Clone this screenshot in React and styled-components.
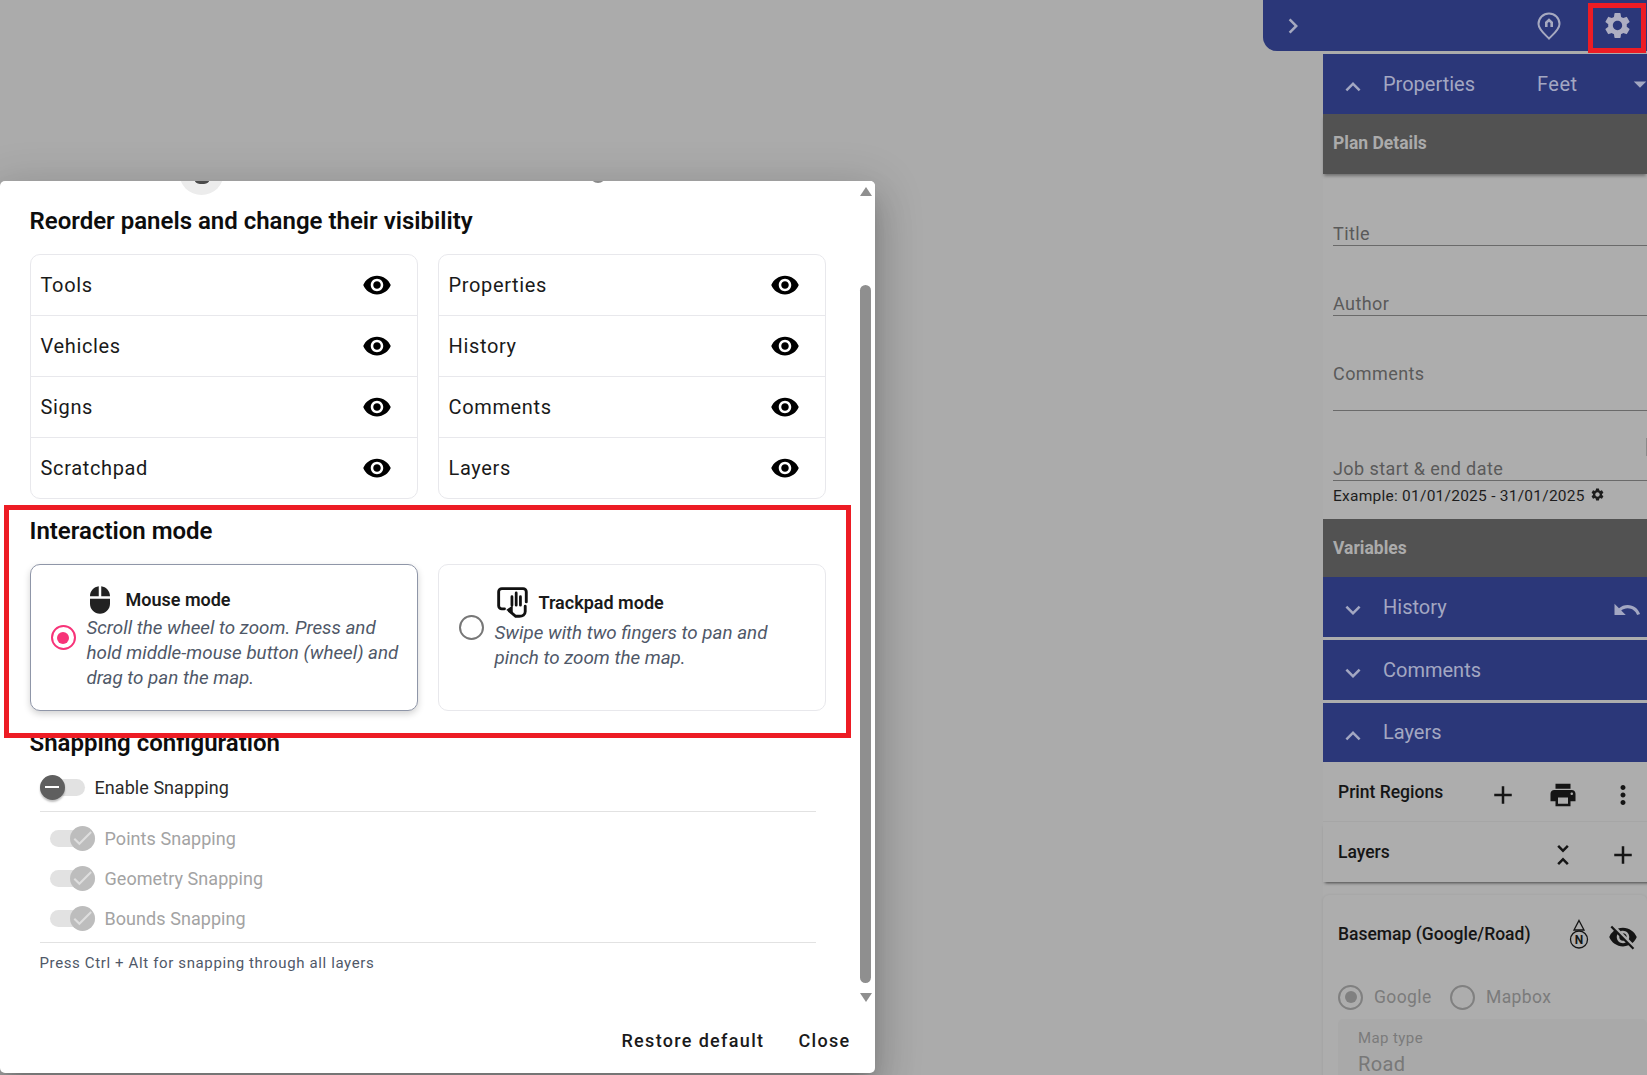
import React from 'react';
import styled, { createGlobalStyle } from 'styled-components';
import {
  MdVisibility, MdVisibilityOff, MdExpandLess, MdExpandMore, MdSettings, MdChevronRight, MdUndo,
  MdAdd, MdPrint, MdMoreVert, MdMouse, MdCheck, MdRemove, MdArrowDropDown, MdUnfoldLess,
} from 'react-icons/md';

const GlobalStyle = createGlobalStyle`
  html, body { margin: 0; padding: 0; }
  body { font-family: Roboto, 'Liberation Sans', sans-serif; background: #ababab; }
`;

const Page = styled.div`
  position: relative;
  width: 1647px;
  height: 1075px;
  overflow: hidden;
  background: #ababab;
  display: flex;
  justify-content: flex-end;
`;

/* right side, dimmed by the backdrop */
const Sidebar = styled.div`
  width: 384px;
  flex: none;
  display: flex;
  flex-direction: column;
`;

const TopBar = styled.div`
  height: 51px;
  flex: none;
  margin-bottom: 3px;
  background: #2b3779;
  border-bottom-left-radius: 14px;
  color: #a6a9c0;
  display: flex;
  align-items: center;
  padding-left: 15px;
`;

const TopBarSpacer = styled.div`
  flex: 1;
`;

const PinSlot = styled.div`
  width: 76px;
  display: flex;
  justify-content: center;
`;

const GearSlot = styled.div`
  width: 60px;
  display: flex;
  justify-content: center;
  color: #aeaec2;
`;

const Panel = styled.div`
  margin-left: 60px;
  flex: 1;
  background: #adadad;
  display: flex;
  flex-direction: column;
  min-height: 0;
`;

const Bar = styled.div`
  height: ${p => p.$h || 60}px;
  flex: none;
  margin-bottom: ${p => p.$gap || 0}px;
  background: #2b3779;
  color: #a3a7c2;
  display: flex;
  align-items: center;
  font-size: 20px;
  position: relative;
`;

const BarChevron = styled.div`
  width: 60px;
  flex: none;
  display: flex;
  justify-content: center;
  padding-top: 6px;
`;

const BarTitle = styled.div`
  width: 154px;
  flex: none;
  padding-bottom: ${p => p.$bottom || 0}px;
`;

const BarEnd = styled.div`
  margin-left: auto;
  display: flex;
  padding-top: ${p => p.$top}px;
  margin-right: ${p => p.$right}px;
`;

const Feet = styled.div`
  flex: 1;
  letter-spacing: 0.5px;
`;

const GreyHead = styled.div`
  height: ${p => p.$h}px;
  flex: none;
  background: #525252;
  color: #ababab;
  font-size: 17.5px;
  font-weight: 700;
  display: flex;
  align-items: center;
  padding-left: 10px;
  padding-bottom: ${p => p.$bottom || 0}px;
  box-sizing: border-box;
  box-shadow: ${p => (p.$shadow ? '0 3px 3px -1px rgba(0,0,0,.35)' : 'none')};
  position: relative;
`;

const Field = styled.div`
  height: ${p => p.$h || 25}px;
  margin: ${p => p.$top}px 0 0 10px;
  box-sizing: border-box;
  border-bottom: 1px solid #6a6a6a;
  color: #5a5a5a;
  font-size: 18px;
  letter-spacing: 0.42px;
  line-height: 25px;
  flex: none;
  position: relative;
`;

const ScrollNub = styled.div`
  position: absolute;
  right: 0;
  top: -18px;
  width: 1px;
  height: 18px;
  background: #8a8a8a;
`;

const Example = styled.div`
  margin: 5px 0 13px 10px;
  height: 20px;
  flex: none;
  color: #1d1d1d;
  font-size: 15.5px;
  letter-spacing: 0.25px;
  line-height: 20px;
  display: flex;
  align-items: center;
  gap: 5px;
  svg { margin-top: -4px; }
`;

const ToolRow = styled.div`
  height: 60px;
  flex: none;
  display: flex;
  align-items: center;
  padding-left: 15px;
  margin-right: -6px;
  box-sizing: border-box;
  color: #151515;
  border-bottom: ${p => (p.$sep ? '1px solid #a6a6a6' : 'none')};
  box-shadow: ${p => (p.$shadow ? '0 3px 3px -2px rgba(0,0,0,.6)' : 'none')};
  position: relative;
`;

const ToolTitle = styled.div`
  flex: 1;
  font-size: 17.5px;
  font-weight: 500;
`;

const ToolIcon = styled.div`
  width: 60px;
  flex: none;
  display: flex;
  justify-content: center;
  padding-top: 6px;
`;

const BaseCard = styled.div`
  margin-top: 13px;
  flex: 1;
  background: #adadad;
  border-radius: 6px 6px 0 0;
  box-shadow: 0 0 3px rgba(0,0,0,.08);
  padding: 9px 0 0 15px;
`;

const BaseRow = styled.div`
  height: 60px;
  display: flex;
  align-items: center;
  margin-right: 2px;
  color: #151515;
`;

const BaseTitle = styled.div`
  flex: 1;
  font-size: 17.5px;
  font-weight: 500;
`;

const BaseIcon = styled.div`
  width: 44px;
  flex: none;
  display: flex;
  justify-content: center;
  padding-top: ${p => p.$top || 0}px;
`;

const SourceRow = styled.div`
  margin-top: 16px;
  height: 34px;
  display: flex;
  align-items: center;
  color: #7b7b7b;
  font-size: 17.5px;
  letter-spacing: 0.4px;
`;

const SourceDot = styled.span`
  width: 25px;
  height: 25px;
  box-sizing: border-box;
  border-radius: 50%;
  border: 2px solid #808080;
  display: flex;
  align-items: center;
  justify-content: center;
  margin-right: ${p => p.$after}px;
  flex: none;
  &::after {
    content: '';
    display: ${p => (p.$on ? 'block' : 'none')};
    width: 12px;
    height: 12px;
    border-radius: 50%;
    background: #808080;
  }
`;

const SourceLabel = styled.span`
  width: ${p => p.$w}px;
  flex: none;
`;

const Select = styled.div`
  margin-top: 5px;
  height: 70px;
  padding: 9px 0 0 20px;
  background: #a9a9a9;
  border-radius: 5px 5px 0 0;
`;

const SelectLabel = styled.div`
  font-size: 15px;
  color: #7b7b7b;
  line-height: 20px;
  letter-spacing: 0.4px;
`;

const SelectValue = styled.div`
  font-size: 20px;
  color: #787878;
  line-height: 32px;
  letter-spacing: 0.4px;
`;

/* settings dialog */
const Dialog = styled.div`
  position: absolute;
  left: 0;
  top: 181px;
  width: 875px;
  height: 892px;
  background: #fff;
  border-radius: 5px;
  box-shadow: 0 11px 15px -7px rgba(0,0,0,.2), 0 24px 38px 3px rgba(0,0,0,.14), 0 9px 46px 8px rgba(0,0,0,.12);
  display: flex;
  flex-direction: column;
  overflow: hidden;
`;

const DialogBody = styled.div`
  height: 826px;
  flex: none;
  display: flex;
`;

const DialogScroll = styled.div`
  flex: 1;
  min-width: 0;
  padding: 27px 0 0 29.5px;
  position: relative;
  overflow: hidden;
`;

const HoverCircle = styled.div`
  position: absolute;
  left: ${p => p.$x}px;
  top: ${p => p.$y}px;
  width: ${p => p.$d}px;
  height: ${p => p.$d}px;
  border-radius: 50%;
  background: ${p => p.$bg};
  display: flex;
  align-items: flex-end;
  justify-content: center;
`;

const EyeStub = styled.div`
  width: 16px;
  height: 6px;
  margin-bottom: 11px;
  background: #4a4a4a;
  border-radius: 0 0 8px 8px;
`;

const ScrollRail = styled.div`
  width: 18px;
  padding-right: 1px;
  flex: none;
  background: #fff;
  display: flex;
  flex-direction: column;
  align-items: center;
  padding-top: 6px;
  box-sizing: border-box;
`;

const ArrowUp = styled.div`
  width: 0;
  height: 0;
  border-left: 6.5px solid transparent;
  border-right: 6.5px solid transparent;
  border-bottom: 9px solid #8f8f8f;
  margin-bottom: 89px;
`;

const ArrowDown = styled.div`
  width: 0;
  height: 0;
  border-left: 6.5px solid transparent;
  border-right: 6.5px solid transparent;
  border-top: 9px solid #8f8f8f;
  margin-top: 10px;
`;

const ScrollThumb = styled.div`
  width: 11px;
  height: 698px;
  flex: none;
  border-radius: 6px;
  background: #8f8f8f;
`;

const SectionTitle = styled.h2`
  margin: ${p => p.$top || 0}px 0 20px;
  font-size: 24px;
  line-height: 26px;
  font-weight: 600;
  color: #0d0d0d;
`;

const TwoCols = styled.div`
  display: grid;
  grid-template-columns: 388px 388px;
  gap: 20px;
  width: 796px;
`;

const ListBox = styled.div`
  border: 1px solid #e8e8ec;
  border-radius: 10px;
  height: 245px;
  box-sizing: border-box;
  display: flex;
  flex-direction: column;
`;

const ListRow = styled.div`
  flex: 1;
  display: flex;
  align-items: center;
  justify-content: space-between;
  padding: 0 25px 0 10px;
  font-size: 20px;
  letter-spacing: 0.65px;
  color: #1a1a1a;
  & + & { border-top: 1px solid #e8e8ec; }
`;

const ModeCard = styled.div`
  height: 147px;
  box-sizing: border-box;
  border-radius: 10px;
  background: #fff;
  border: 1px solid ${p => (p.$active ? '#8f96a8' : '#e8e8ec')};
  box-shadow: ${p => (p.$active ? '0 3px 7px rgba(0,0,0,.18)' : 'none')};
  display: flex;
  align-items: center;
  padding-left: 20px;
`;

const Radio = styled.div`
  width: 25px;
  height: 25px;
  box-sizing: border-box;
  flex: none;
  border-radius: 50%;
  border: 2px solid ${p => (p.$on ? '#f73378' : '#777')};
  display: flex;
  align-items: center;
  justify-content: center;
  margin-top: ${p => p.$top || 0}px;
  &::after {
    content: '';
    display: ${p => (p.$on ? 'block' : 'none')};
    width: 12px;
    height: 12px;
    border-radius: 50%;
    background: #f73378;
  }
`;

const ModeText = styled.div`
  margin-left: ${p => p.$left}px;
  margin-top: ${p => p.$top || 0}px;
  display: flex;
  flex-direction: column;
`;

const ModeHead = styled.div`
  display: flex;
  align-items: center;
  gap: ${p => p.$gap}px;
  margin-left: ${p => p.$indent}px;
  height: ${p => p.$h}px;
  font-size: 18px;
  font-weight: 600;
  color: #1a1a1a;
  span { margin-top: ${p => p.$nudge || 0}px; }
`;

const ModeDesc = styled.div`
  font-size: 18.8px;
  font-style: italic;
  line-height: 25px;
  color: #4f5868;
`;

const SwitchRow = styled.div`
  display: flex;
  align-items: center;
  height: 40px;
  margin: ${p => p.$top || 0}px 0 0 ${p => p.$left}px;
  gap: ${p => p.$gap}px;
  font-size: 18px;
  letter-spacing: 0.06px;
  color: ${p => (p.$off ? '#a3a3a3' : '#2a2a2a')};
`;

const SwitchTrack = styled.div`
  width: ${p => p.$w}px;
  height: 17px;
  border-radius: 9px;
  background: #e2e2e2;
  position: relative;
  flex: none;
`;

const SwitchKnob = styled.div`
  position: absolute;
  top: -4px;
  left: ${p => p.$left}px;
  width: 25px;
  height: 25px;
  border-radius: 50%;
  background: ${p => p.$bg};
  color: ${p => p.$fg};
  display: flex;
  align-items: center;
  justify-content: center;
  box-shadow: ${p => (p.$raised ? '0 2px 2px rgba(0,0,0,.25)' : 'none')};
`;

const Rule = styled.div`
  width: 776px;
  height: 1px;
  margin: ${p => p.$top}px 0 ${p => p.$bottom}px 10px;
  background: #e2e2e2;
`;

const Note = styled.div`
  margin-left: 10px;
  font-size: 15px;
  line-height: 20px;
  letter-spacing: 0.63px;
  color: #4f5868;
`;

const DialogActions = styled.div`
  flex: 1;
  display: flex;
  justify-content: flex-end;
  align-items: flex-start;
  gap: 34px;
  padding: 22px 24.5px 0 0;
`;

const ActionButton = styled.button`
  border: 0;
  padding: 0;
  background: none;
  font-family: inherit;
  font-size: 18px;
  line-height: 24px;
  font-weight: 500;
  letter-spacing: 1.33px;
  color: #1a1a1a;
`;

/* red annotation boxes drawn over the screenshot */
const Highlight = styled.div`
  position: absolute;
  left: ${p => p.$x}px;
  top: ${p => p.$y}px;
  width: ${p => p.$w}px;
  height: ${p => p.$h}px;
  box-sizing: border-box;
  border: 5px solid #ed1c24;
  pointer-events: none;
`;

const PinIcon = () => (
  <svg width="24" height="28" viewBox="0 0 24 28" fill="none" stroke="currentColor" strokeWidth="2">
    <path d="M12 26.5C8 22.5 1.5 17.5 1.5 12C1.5 6 6.3 1.5 12 1.5S22.5 6 22.5 12C22.5 17.5 16 22.5 12 26.5Z" />
    <path d="M9.3 15V10.5L12 8L14.7 10.5V15" strokeWidth="2.6" />
  </svg>
);

const TrackpadIcon = () => (
  <svg width="34" height="34" viewBox="0 0 32 32" fill="none" stroke="#111" strokeWidth="2.7" strokeLinecap="round">
    <path d="M8 21.5H5.5A3 3 0 0 1 2.5 18.5V5.5A3 3 0 0 1 5.5 2.5H25.5A3 3 0 0 1 28.5 5.5V15" />
    <path d="M15 18V10M19 18V6.5M23 18V10" strokeWidth="2.6" />
    <path d="M27.5 19V24C27.5 27 25 28.5 22 28.5H18.5L12.5 23.5" />
    <path d="M11 22.5L15 19.5V25Z" fill="#111" strokeWidth="1.5" />
  </svg>
);

const NorthIcon = () => (
  <svg width="20" height="30" viewBox="0 0 20 30" fill="none" stroke="#151515" strokeWidth="1.3">
    <path d="M10 1.5L15 11H5Z" />
    <circle cx="10" cy="20.5" r="8.5" />
    <text x="10" y="25" textAnchor="middle" fontFamily="Roboto, sans-serif" fontSize="12" fontWeight="700" fill="#151515" stroke="none">N</text>
  </svg>
);

const panelsLeft = ['Tools', 'Vehicles', 'Signs', 'Scratchpad'];
const panelsRight = ['Properties', 'History', 'Comments', 'Layers'];
const snapping = ['Points Snapping', 'Geometry Snapping', 'Bounds Snapping'];

function PanelList({ items }) {
  return (
    <ListBox>
      {items.map(name => (
        <ListRow key={name}>
          {name}
          <MdVisibility size={30} color="#000" />
        </ListRow>
      ))}
    </ListBox>
  );
}

export default function App() {
  return (
    <Page>
      <GlobalStyle />
      <Sidebar>
        <TopBar>
          <MdChevronRight size={30} />
          <TopBarSpacer />
          <PinSlot><PinIcon /></PinSlot>
          <GearSlot><MdSettings size={31} /></GearSlot>
        </TopBar>
        <Panel>
          <Bar>
            <BarChevron><MdExpandLess size={30} /></BarChevron>
            <BarTitle>Properties</BarTitle>
            <Feet>Feet</Feet>
            <BarEnd $top={0} $right={-8}><MdArrowDropDown size={30} /></BarEnd>
          </Bar>
          <GreyHead $h={60} $bottom={2} $shadow>Plan Details</GreyHead>
          <Field $top={47}>Title</Field>
          <Field $top={45}>Author</Field>
          <Field $top={45} $h={50}>Comments</Field>
          <Field $top={45}>Job start &amp; end date<ScrollNub /></Field>
          <Example>Example: 01/01/2025 - 31/01/2025 <MdSettings size={15} /></Example>
          <GreyHead $h={58}>Variables</GreyHead>
          <Bar $gap={3}>
            <BarChevron><MdExpandMore size={30} /></BarChevron>
            <BarTitle>History</BarTitle>
            <BarEnd $top={6} $right={5}><MdUndo size={30} /></BarEnd>
          </Bar>
          <Bar $gap={3}>
            <BarChevron><MdExpandMore size={30} /></BarChevron>
            <BarTitle>Comments</BarTitle>
          </Bar>
          <Bar $h={59}>
            <BarChevron><MdExpandLess size={30} /></BarChevron>
            <BarTitle $bottom={2}>Layers</BarTitle>
          </Bar>
          <ToolRow $sep>
            <ToolTitle>Print Regions</ToolTitle>
            <ToolIcon><MdAdd size={30} /></ToolIcon>
            <ToolIcon><MdPrint size={30} /></ToolIcon>
            <ToolIcon><MdMoreVert size={30} /></ToolIcon>
          </ToolRow>
          <ToolRow $shadow>
            <ToolTitle>Layers</ToolTitle>
            <ToolIcon><MdUnfoldLess size={30} /></ToolIcon>
            <ToolIcon><MdAdd size={30} /></ToolIcon>
          </ToolRow>
          <BaseCard>
            <BaseRow>
              <BaseTitle>Basemap (Google/Road)</BaseTitle>
              <BaseIcon><NorthIcon /></BaseIcon>
              <BaseIcon $top={6}><MdVisibilityOff size={30} /></BaseIcon>
            </BaseRow>
            <SourceRow>
              <SourceDot $on $after={11} />
              <SourceLabel $w={75.5}>Google</SourceLabel>
              <SourceDot $after={11.5} />
              <SourceLabel $w={70}>Mapbox</SourceLabel>
            </SourceRow>
            <Select>
              <SelectLabel>Map type</SelectLabel>
              <SelectValue>Road</SelectValue>
            </Select>
          </BaseCard>
        </Panel>
      </Sidebar>

      <Dialog>
        <DialogBody>
          <DialogScroll>
            <HoverCircle $x={179} $y={-31} $d={45} $bg="#ececec"><EyeStub /></HoverCircle>
            <HoverCircle $x={590} $y={-14} $d={16} $bg="#8a8a8a" />
            <SectionTitle>Reorder panels and change their visibility</SectionTitle>
            <TwoCols>
              <PanelList items={panelsLeft} />
              <PanelList items={panelsRight} />
            </TwoCols>
            <SectionTitle $top={19}>Interaction mode</SectionTitle>
            <TwoCols>
              <ModeCard $active>
                <Radio $on />
                <ModeText $left={11}>
                  <ModeHead $indent={-2} $gap={11} $h={32} $nudge={-2}>
                    <MdMouse size={30} color="#222" />
                    <span>Mouse mode</span>
                  </ModeHead>
                  <ModeDesc>
                    Scroll the wheel to zoom. Press and<br />
                    hold middle-mouse button (wheel) and<br />
                    drag to pan the map.
                  </ModeDesc>
                </ModeText>
              </ModeCard>
              <ModeCard>
                <Radio $top={-20} />
                <ModeText $left={11} $top={-20}>
                  <ModeHead $indent={1} $gap={9} $h={36}>
                    <TrackpadIcon />
                    <span>Trackpad mode</span>
                  </ModeHead>
                  <ModeDesc>
                    Swipe with two fingers to pan and<br />
                    pinch to zoom the map.
                  </ModeDesc>
                </ModeText>
              </ModeCard>
            </TwoCols>
            <SectionTitle $top={19}>Snapping configuration</SectionTitle>
            <SwitchRow $left={10} $gap={10} $top={-9}>
              <SwitchTrack $w={45}>
                <SwitchKnob $left={0} $bg="#5f5f5f" $fg="#fff" $raised><MdRemove size={24} /></SwitchKnob>
              </SwitchTrack>
              Enable Snapping
            </SwitchRow>
            <Rule $top={4} $bottom={6} />
            {snapping.map(name => (
              <SwitchRow key={name} $left={20} $gap={10} $off>
                <SwitchTrack $w={45}>
                  <SwitchKnob $left={20} $bg="#bdbdbd" $fg="#dedede"><MdCheck size={26} /></SwitchKnob>
                </SwitchTrack>
                {name}
              </SwitchRow>
            ))}
            <Rule $top={4} $bottom={10} />
            <Note>Press Ctrl + Alt for snapping through all layers</Note>
          </DialogScroll>
          <ScrollRail>
            <ArrowUp />
            <ScrollThumb />
            <ArrowDown />
          </ScrollRail>
        </DialogBody>
        <DialogActions>
          <ActionButton>Restore default</ActionButton>
          <ActionButton>Close</ActionButton>
        </DialogActions>
      </Dialog>

      <Highlight $x={4} $y={505} $w={847} $h={233} />
      <Highlight $x={1588} $y={3} $w={58} $h={50} />
    </Page>
  );
}
